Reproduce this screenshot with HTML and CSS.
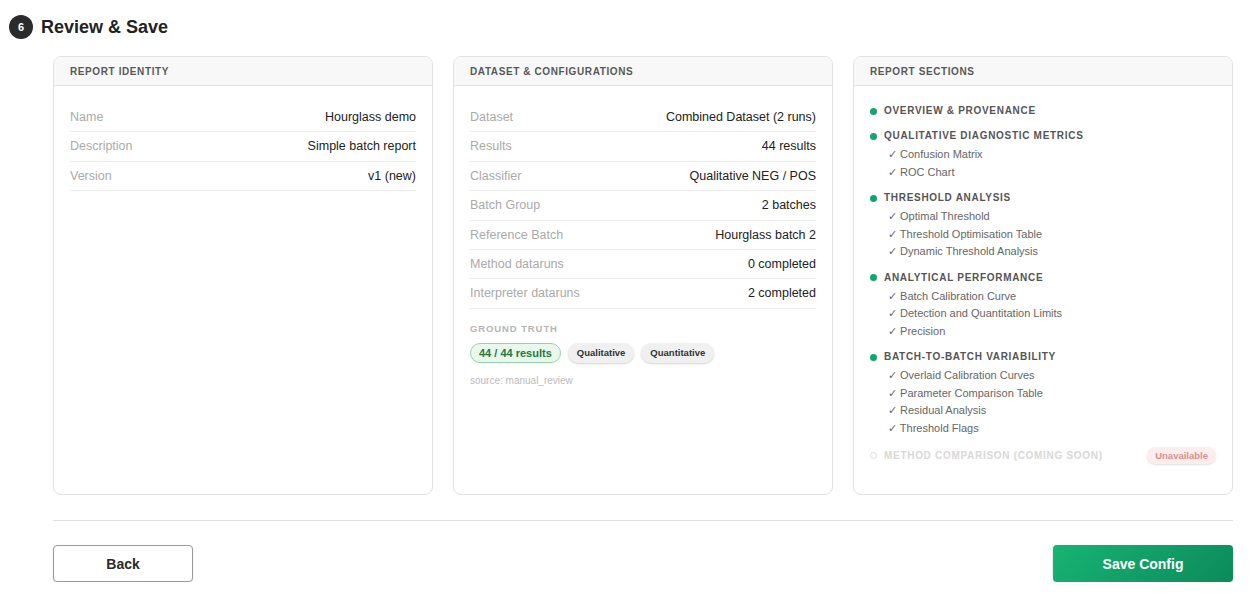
FILE: index.html
```html
<!DOCTYPE html>
<html lang="en">
<head>
    <meta charset="UTF-8">
    <title>Review &amp; Save</title>
    <link rel="stylesheet" href="styles.css">
</head>
<body>
    <div class="step">
        <div class="step-title">
            <span class="step-num">6</span>
            <h2>Review &amp; Save</h2>
        </div>

        <div class="step-body">
            <div class="cards">
                <!-- Report identity -->
                <div class="card">
                    <div class="card-head">Report Identity</div>
                    <div class="card-content">
                        <div class="row"><span class="label">Name</span><span class="value">Hourglass demo</span></div>
                        <div class="row"><span class="label">Description</span><span class="value">Simple batch report</span></div>
                        <div class="row"><span class="label">Version</span><span class="value">v1 (new)</span></div>
                    </div>
                </div>

                <!-- Dataset & configurations -->
                <div class="card">
                    <div class="card-head">Dataset &amp; Configurations</div>
                    <div class="card-content">
                        <div class="row"><span class="label">Dataset</span><span class="value">Combined Dataset (2 runs)</span></div>
                        <div class="row"><span class="label">Results</span><span class="value">44 results</span></div>
                        <div class="row"><span class="label">Classifier</span><span class="value">Qualitative NEG / POS</span></div>
                        <div class="row"><span class="label">Batch Group</span><span class="value">2 batches</span></div>
                        <div class="row"><span class="label">Reference Batch</span><span class="value">Hourglass batch 2</span></div>
                        <div class="row"><span class="label">Method dataruns</span><span class="value">0 completed</span></div>
                        <div class="row"><span class="label">Interpreter dataruns</span><span class="value">2 completed</span></div>

                        <div class="gt-label">Ground Truth</div>
                        <div class="pills">
                            <span class="pill pill-ok">44 / 44 results</span>
                            <span class="pill">Qualitative</span>
                            <span class="pill">Quantitative</span>
                        </div>
                        <div class="gt-source">source: manual_review</div>
                    </div>
                </div>

                <!-- Report sections -->
                <div class="card">
                    <div class="card-head">Report Sections</div>
                    <div class="card-content sections">
                        <div class="section">
                            <div class="section-title"><span class="dot"></span>Overview &amp; Provenance</div>
                        </div>
                        <div class="section">
                            <div class="section-title"><span class="dot"></span>Qualitative Diagnostic Metrics</div>
                            <ul class="subs">
                                <li>✓ Confusion Matrix</li>
                                <li>✓ ROC Chart</li>
                            </ul>
                        </div>
                        <div class="section">
                            <div class="section-title"><span class="dot"></span>Threshold Analysis</div>
                            <ul class="subs">
                                <li>✓ Optimal Threshold</li>
                                <li>✓ Threshold Optimisation Table</li>
                                <li>✓ Dynamic Threshold Analysis</li>
                            </ul>
                        </div>
                        <div class="section">
                            <div class="section-title"><span class="dot"></span>Analytical Performance</div>
                            <ul class="subs">
                                <li>✓ Batch Calibration Curve</li>
                                <li>✓ Detection and Quantitation Limits</li>
                                <li>✓ Precision</li>
                            </ul>
                        </div>
                        <div class="section">
                            <div class="section-title"><span class="dot"></span>Batch-to-Batch Variability</div>
                            <ul class="subs">
                                <li>✓ Overlaid Calibration Curves</li>
                                <li>✓ Parameter Comparison Table</li>
                                <li>✓ Residual Analysis</li>
                                <li>✓ Threshold Flags</li>
                            </ul>
                        </div>
                        <div class="section section-off">
                            <div class="section-title"><span class="dot"></span>Method Comparison (coming soon)<span class="pill pill-off">Unavailable</span></div>
                        </div>
                    </div>
                </div>
            </div>

            <div class="actions">
                <button class="btn btn-back">Back</button>
                <button class="btn btn-save">Save Config</button>
            </div>
        </div>
    </div>
</body>
</html>
```

FILE: styles.css
```css
body {
    margin: 0;
    font-family: "Liberation Sans", Arial, sans-serif;
    color: #222;
    background: #fff;
}

.step {
    padding: 15px 23px 0 9px;
}

/* Step heading with number badge */
.step-title {
    display: flex;
    align-items: center;
    gap: 8px;
    height: 24px;
}

.step-num {
    width: 24px;
    height: 24px;
    border-radius: 50%;
    background: #2b2b2b;
    color: #fff;
    font-size: 11px;
    font-weight: bold;
    display: flex;
    align-items: center;
    justify-content: center;
}

.step-title h2 {
    margin: 0;
    font-size: 18px;
    font-weight: bold;
    color: #222;
}

.step-body {
    margin-left: 44px;
    padding-top: 17px;
}

/* Three summary cards */
.cards {
    display: grid;
    grid-template-columns: repeat(3, 1fr);
    gap: 20px;
}

.card {
    box-sizing: border-box;
    min-height: 439px;
    border: 1px solid #e2e2e2;
    border-radius: 8px;
    overflow: hidden;
}

.card-head {
    height: 28px;
    line-height: 29px;
    padding: 0 16px;
    background: #f8f8f8;
    border-bottom: 1px solid #e4e4e4;
    font-size: 10px;
    font-weight: bold;
    letter-spacing: 0.6px;
    text-transform: uppercase;
    color: #585858;
}

.card-content {
    padding: 17px 16px 16px;
}

.card-content.sections {
    padding-top: 18px;
}

.row {
    display: flex;
    justify-content: space-between;
    padding: 7px 0;
    line-height: 14.4px;
    font-size: 12.5px;
    border-bottom: 1px solid #ececec;
}

.label {
    color: #aaa;
}

.value {
    color: #222;
}

/* Ground truth block */
.gt-label {
    margin-top: 14px;
    font-size: 9.5px;
    line-height: 11px;
    font-weight: bold;
    letter-spacing: 0.9px;
    text-transform: uppercase;
    color: #b5b5b5;
}

.pills {
    display: flex;
    gap: 7px;
    margin-top: 9px;
}

.pill {
    display: inline-flex;
    align-items: center;
    height: 20px;
    padding: 0 9px;
    box-sizing: border-box;
    border-radius: 10px;
    background: #f0f0f0;
    font-size: 9.5px;
    font-weight: bold;
    color: #333;
    box-shadow: 0 1px 2px rgba(0, 0, 0, 0.18);
}

.pill-ok {
    background: #e9f7ed;
    border: 1px solid #93d4a6;
    color: #237a3c;
    font-size: 11px;
    padding: 0 8px;
    box-shadow: none;
}

.gt-source {
    margin-top: 12px;
    font-size: 10px;
    line-height: 12px;
    color: #bbb;
}

/* Report section checklist */
.section + .section {
    margin-top: 11px;
}

.section-title {
    display: flex;
    align-items: center;
    line-height: 14px;
    font-size: 10px;
    font-weight: bold;
    letter-spacing: 0.7px;
    text-transform: uppercase;
    color: #555;
}

.dot {
    width: 7px;
    height: 7px;
    border-radius: 50%;
    background: #12a56c;
    margin-right: 7px;
    flex-shrink: 0;
}

.subs {
    list-style: none;
    margin: 3px 0 0;
    padding: 0 0 0 18px;
    font-size: 11px;
    line-height: 17.5px;
    color: #666;
}

.section:has(.subs) + .section {
    margin-top: 10px;
}

.section-off .section-title {
    color: #d8d8d8;
}

.section-off .dot {
    box-sizing: border-box;
    background: none;
    border: 1px solid #dcdcdc;
}

.pill-off {
    margin-left: auto;
    height: 17px;
    padding: 0 8px;
    background: #fdeeee;
    color: #e08c8c;
    letter-spacing: 0;
    text-transform: none;
    font-size: 9.5px;
    box-shadow: 0 1px 2px rgba(0, 0, 0, 0.12);
}

/* Footer actions */
.actions {
    display: flex;
    justify-content: space-between;
    margin-top: 25px;
    padding-top: 24px;
    border-top: 1px solid #e0e0e0;
}

.btn {
    height: 37px;
    border-radius: 4px;
    font-family: inherit;
    font-size: 14px;
    font-weight: bold;
    cursor: pointer;
}

.btn-back {
    width: 140px;
    background: #fff;
    border: 1px solid #9a9a9a;
    color: #2a2a2a;
    box-shadow: 0 1px 2px rgba(0, 0, 0, 0.12);
}

.btn-save {
    width: 180px;
    background: linear-gradient(135deg, #17b473, #0c8a5b);
    border: none;
    color: #fff;
    box-shadow: 0 1px 3px rgba(0, 0, 0, 0.18);
}
```
